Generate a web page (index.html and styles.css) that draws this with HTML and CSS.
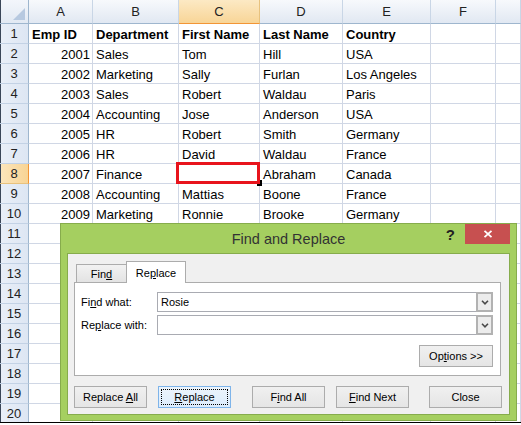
FILE: index.html
```html
<!DOCTYPE html>
<html>
<head>
<meta charset="utf-8">
<title>Find and Replace</title>
<link rel="stylesheet" href="styles.css">
</head>
<body>
<div class="frame">
  <div class="sheet">
    <div class="corner"><svg width="28" height="23" viewBox="0 0 28 23"><polygon points="25,8 25,20 13,20" fill="#b7c9e0"/></svg></div>
    <div class="ch">A</div><div class="ch">B</div><div class="ch sel">C</div><div class="ch">D</div><div class="ch">E</div><div class="ch">F</div><div class="ch"></div>

    <div class="rh">1</div><div class="c b">Emp ID</div><div class="c b">Department</div><div class="c b">First Name</div><div class="c b">Last Name</div><div class="c b">Country</div><div class="c"></div><div class="c"></div>
    <div class="rh">2</div><div class="c n">2001</div><div class="c">Sales</div><div class="c">Tom</div><div class="c">Hill</div><div class="c">USA</div><div class="c"></div><div class="c"></div>
    <div class="rh">3</div><div class="c n">2002</div><div class="c">Marketing</div><div class="c">Sally</div><div class="c">Furlan</div><div class="c">Los Angeles</div><div class="c"></div><div class="c"></div>
    <div class="rh">4</div><div class="c n">2003</div><div class="c">Sales</div><div class="c">Robert</div><div class="c">Waldau</div><div class="c">Paris</div><div class="c"></div><div class="c"></div>
    <div class="rh">5</div><div class="c n">2004</div><div class="c">Accounting</div><div class="c">Jose</div><div class="c">Anderson</div><div class="c">USA</div><div class="c"></div><div class="c"></div>
    <div class="rh">6</div><div class="c n">2005</div><div class="c">HR</div><div class="c">Robert</div><div class="c">Smith</div><div class="c">Germany</div><div class="c"></div><div class="c"></div>
    <div class="rh">7</div><div class="c n">2006</div><div class="c">HR</div><div class="c">David</div><div class="c">Waldau</div><div class="c">France</div><div class="c"></div><div class="c"></div>
    <div class="rh sel">8</div><div class="c n">2007</div><div class="c">Finance</div><div class="c"></div><div class="c">Abraham</div><div class="c">Canada</div><div class="c"></div><div class="c"></div>
    <div class="rh">9</div><div class="c n">2008</div><div class="c">Accounting</div><div class="c">Mattias</div><div class="c">Boone</div><div class="c">France</div><div class="c"></div><div class="c"></div>
    <div class="rh">10</div><div class="c n">2009</div><div class="c">Marketing</div><div class="c">Ronnie</div><div class="c">Brooke</div><div class="c">Germany</div><div class="c"></div><div class="c"></div>
    <div class="rh">11</div><div class="c"></div><div class="c"></div><div class="c"></div><div class="c"></div><div class="c"></div><div class="c"></div><div class="c"></div>
    <div class="rh">12</div><div class="c"></div><div class="c"></div><div class="c"></div><div class="c"></div><div class="c"></div><div class="c"></div><div class="c"></div>
    <div class="rh">13</div><div class="c"></div><div class="c"></div><div class="c"></div><div class="c"></div><div class="c"></div><div class="c"></div><div class="c"></div>
    <div class="rh">14</div><div class="c"></div><div class="c"></div><div class="c"></div><div class="c"></div><div class="c"></div><div class="c"></div><div class="c"></div>
    <div class="rh">15</div><div class="c"></div><div class="c"></div><div class="c"></div><div class="c"></div><div class="c"></div><div class="c"></div><div class="c"></div>
    <div class="rh">16</div><div class="c"></div><div class="c"></div><div class="c"></div><div class="c"></div><div class="c"></div><div class="c"></div><div class="c"></div>
    <div class="rh">17</div><div class="c"></div><div class="c"></div><div class="c"></div><div class="c"></div><div class="c"></div><div class="c"></div><div class="c"></div>
    <div class="rh">18</div><div class="c"></div><div class="c"></div><div class="c"></div><div class="c"></div><div class="c"></div><div class="c"></div><div class="c"></div>
    <div class="rh">19</div><div class="c"></div><div class="c"></div><div class="c"></div><div class="c"></div><div class="c"></div><div class="c"></div><div class="c"></div>
    <div class="rh">20</div><div class="c"></div><div class="c"></div><div class="c"></div><div class="c"></div><div class="c"></div><div class="c"></div><div class="c"></div>
  </div>

  <div class="handle"></div>
  <div class="mark"></div>

  <div class="dialog">
    <div class="titlebar">
      <span class="title">Find and Replace</span>
      <span class="help">?</span>
      <span class="close"><svg width="10" height="8" viewBox="0 0 10 8"><path d="M1.5 0.8L8.5 7.2M8.5 0.8L1.5 7.2" stroke="#fff" stroke-width="1.8" fill="none"/></svg></span>
    </div>
    <div class="inner">
      <div class="tabs">
        <div class="tab">Fin<u>d</u></div>
        <div class="tab active">Re<u>p</u>lace</div>
      </div>
      <div class="panel">
        <div class="field">
          <span class="label">Fi<u>n</u>d what:</span>
          <div class="combo"><span class="val">Rosie</span><span class="drop"><svg width="8" height="5" viewBox="0 0 8 5"><path d="M1 0.8L4 3.8L7 0.8" stroke="#4a4a4a" stroke-width="1.6" fill="none"/></svg></span></div>
        </div>
        <div class="field">
          <span class="label">Re<u>p</u>lace with:</span>
          <div class="combo"><span class="val"></span><span class="drop"><svg width="8" height="5" viewBox="0 0 8 5"><path d="M1 0.8L4 3.8L7 0.8" stroke="#4a4a4a" stroke-width="1.6" fill="none"/></svg></span></div>
        </div>
        <button class="btn options">Op<u>t</u>ions &gt;&gt;</button>
      </div>
      <div class="actions">
        <button class="btn">Replace <u>A</u>ll</button>
        <button class="btn focus gap-s"><u>R</u>eplace</button>
        <button class="btn gap-l">F<u>i</u>nd All</button>
        <button class="btn gap-s"><u>F</u>ind Next</button>
        <button class="btn gap-m">Close</button>
      </div>
    </div>
  </div>
</div>
</body>
</html>
```

FILE: styles.css
```css
* { box-sizing: border-box; }

html, body {
  margin: 0;
  padding: 0;
  background: #ffffff;
}

body {
  font-family: "Liberation Sans", Arial, sans-serif;
  color: #000;
}

.frame {
  position: relative;
  width: 521px;
  height: 423px;
  overflow: hidden;
  border-bottom: 1px solid #000;
}

/* ---------- spreadsheet ---------- */
.sheet {
  display: grid;
  grid-template-columns: 29px 64px 86px 81px 83px 88px 65px 1fr;
  grid-template-rows: 24px;
  grid-auto-rows: 20px;
  font-size: 13px;
}

.sheet > div {
  border-right: 1px solid #d0d7e5;
  border-bottom: 1px solid #d0d7e5;
  white-space: nowrap;
  overflow: hidden;
}

.corner {
  background: linear-gradient(#f3f6fb, #e2e9f3);
  border-right-color: #9eb6ce !important;
  border-bottom-color: #9eb6ce !important;
  box-shadow: inset 1px 0 #3a4658;
}

.corner svg { display: block; }

.ch {
  background: linear-gradient(#f7f9fc, #e1e8f2);
  border-right-color: #c9d6e6 !important;
  border-bottom-color: #9eb6ce !important;
  text-align: center;
  line-height: 23px;
  color: #222;
}

.ch.sel {
  background: linear-gradient(#fce9c4, #f8d597);
  border-bottom-color: #f29536 !important;
  border-right-color: #e8c27e !important;
}

.rh {
  background: linear-gradient(90deg, #e9eff8, #dde6f3);
  border-right-color: #9eb6ce !important;
  border-bottom-color: #c3d2e5 !important;
  text-align: center;
  line-height: 20px;
  color: #222;
  box-shadow: inset 1px 0 #3a4658;
}

.rh.sel {
  background: linear-gradient(90deg, #fce6bd, #f8d494);
  border-right-color: #f29536 !important;
  border-bottom-color: #e8c27e !important;
}

.c {
  padding: 0 3px;
  line-height: 21px;
}

.c.n {
  text-align: right;
  padding-right: 2px;
}

.c.b { font-weight: bold; }

/* annotation over cell C8 */
.handle {
  position: absolute;
  left: 257px;
  top: 180px;
  width: 5px;
  height: 6px;
  background: #000;
}

.mark {
  position: absolute;
  left: 176px;
  top: 162px;
  width: 84px;
  height: 22px;
  border: 3px solid #e8141c;
}

/* ---------- dialog ---------- */
.dialog {
  position: absolute;
  left: 60px;
  top: 223px;
  width: 457px;
  height: 198px;
  border: 1px solid #86ac4c;
  background: #a5cf60;
  padding: 0 6px 5px 6px;
  display: flex;
  flex-direction: column;
  font-size: 11px;
}

.titlebar {
  position: relative;
  height: 29px;
  display: flex;
  align-items: center;
  justify-content: center;
  flex: none;
}

.title {
  font-size: 14.5px;
  color: #333;
  padding-top: 1px;
}

.help {
  position: absolute;
  right: 55px;
  top: 0;
  height: 20px;
  line-height: 21px;
  font-size: 15px;
  font-weight: bold;
  color: #222;
}

.close {
  position: absolute;
  right: 0;
  top: 0;
  width: 45px;
  height: 20px;
  background: #c75050;
  display: flex;
  align-items: center;
  justify-content: center;
}

.close svg { display: block; }

.inner {
  flex: 1;
  background: #f0f0f0;
  border: 1px solid #86ac4c;
  padding: 7px 8px 6px 6px;
  display: flex;
  flex-direction: column;
}

.tabs {
  display: flex;
  align-items: flex-end;
  height: 22px;
  margin: 0 0 -1px 2px;
  position: relative;
  z-index: 1;
}

.tab {
  width: 51px;
  height: 18px;
  margin-bottom: 1px;
  border: 1px solid #acacac;
  border-bottom: none;
  background: linear-gradient(#f2f2f2, #e3e3e3);
  text-align: center;
  line-height: 18px;
}

.tab.active {
  width: 60px;
  height: 22px;
  margin-bottom: 0;
  margin-left: -1px;
  background: #fff;
  line-height: 22px;
}

.panel {
  height: 94px;
  border: 1px solid #acacac;
  background: #fff;
  padding: 9px 7px 0 6px;
  display: flex;
  flex-direction: column;
  gap: 3px;
}

.field {
  display: flex;
  align-items: center;
  height: 20px;
}

.label {
  width: 76px;
  flex: none;
}

.combo {
  flex: 1;
  height: 20px;
  border: 1px solid #a9abb2;
  background: #fff;
  display: flex;
}

.val {
  flex: 1;
  padding-left: 3px;
  line-height: 18px;
}

.drop {
  width: 17px;
  margin: -1px -1px -1px 0;
  border: 2px solid #b2b2b2;
  background: #ececec;
  display: flex;
  align-items: center;
  justify-content: center;
}

.drop svg { display: block; }

.btn {
  width: 73px;
  height: 22px;
  border: 1px solid #acacac;
  background: linear-gradient(#f0f0f0, #e5e5e5);
  font-family: "Liberation Sans", Arial, sans-serif;
  font-size: 11px;
  color: #000;
  padding: 0;
  flex: none;
}

.options {
  align-self: flex-end;
  margin-top: 7px;
  width: 74px;
}

.actions {
  display: flex;
  margin-top: 10px;
}

.gap-s { margin-left: 11px; }
.gap-l { margin-left: 21px; }
.gap-m { margin-left: 20px; }

.btn.focus {
  border-color: #7eb4ea;
  background: linear-gradient(#ecf4fc, #dcecfc);
  outline: 1px dotted #000;
  outline-offset: -4px;
}
```
